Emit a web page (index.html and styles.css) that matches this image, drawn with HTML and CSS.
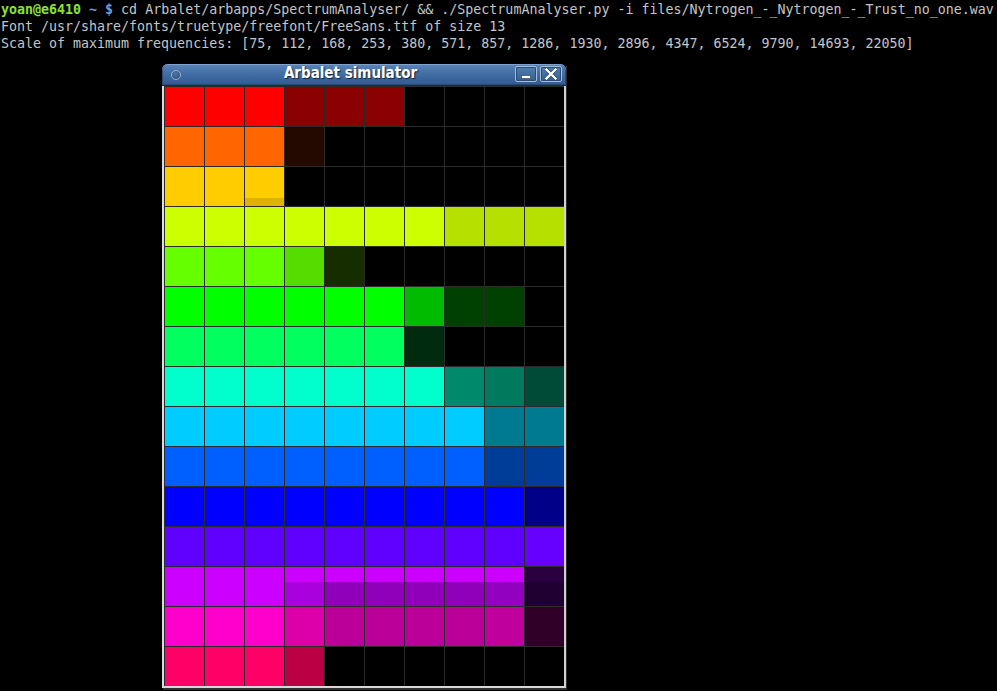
FILE: index.html
```html
<!DOCTYPE html>
<html>
<head>
<meta charset="utf-8">
<title>Arbalet simulator</title>
<link rel="stylesheet" href="styles.css">
</head>
<body>
<pre class="term"><span class="user">yoan@e6410</span> <span class="path">~ $</span> cd Arbalet/arbapps/SpectrumAnalyser/ &amp;&amp; ./SpectrumAnalyser.py -i files/Nytrogen_-_Nytrogen_-_Trust_no_one.wav
Font /usr/share/fonts/truetype/freefont/FreeSans.ttf of size 13
Scale of maximum frequencies: [75, 112, 168, 253, 380, 571, 857, 1286, 1930, 2896, 4347, 6524, 9790, 14693, 22050]</pre>
<div class="window">
  <div class="titlebar">
    <span class="menu-dot"></span>
    <span class="title">Arbalet simulator</span>
    <span class="wbtn">
      <svg width="12" height="12" viewBox="0 0 12 12"><rect x="1.5" y="7.5" width="9" height="3" fill="#fff" stroke="#1d3a5e" stroke-width="0.6"/></svg>
    </span>
    <span class="wbtn">
      <svg width="12" height="12" viewBox="0 0 12 12"><path d="M1.5 1.5 L10.5 10.5 M10.5 1.5 L1.5 10.5" stroke="#1d3a5e" stroke-width="3.6" stroke-linecap="square"/><path d="M1.5 1.5 L10.5 10.5 M10.5 1.5 L1.5 10.5" stroke="#fff" stroke-width="2.4" stroke-linecap="square"/></svg>
    </span>
  </div>
  <div class="frame">
    <div class="grid" id="grid"></div>
  </div>
</div>
<script src="script.js"></script>
</body>
</html>
```
FILE: styles.css
```css
html, body {
  margin: 0;
  padding: 0;
  background: #000;
  height: 100%;
  overflow: hidden;
}
.term {
  margin: 0;
  padding: 1px 0 0 1px;
  font-family: "DejaVu Sans Mono", monospace;
  font-size: 13.3px;
  line-height: 17px;
  color: #c3c6c8;
  white-space: pre;
}
.user {
  color: #8ae234;
  font-weight: bold;
}
.path {
  color: #729fcf;
  font-weight: bold;
}
.window {
  margin: 12px 0 0 162px;
  width: 404px;
  box-shadow: 1px 2px 0 #2e2e2e;
}
.titlebar {
  height: 21px;
  border-bottom: 1px solid #1c2c40;
  border-radius: 6px 6px 0 0;
  background: linear-gradient(to bottom, #5d86ba 0%, #4773a9 35%, #3a659c 70%, #315c92 100%);
  box-shadow: inset 0 1px 0 #7ea1cd, inset 0 0 0 1px #2b4a72;
  display: flex;
  align-items: center;
  padding: 0 4px 0 9px;
}
.menu-dot {
  width: 8px;
  height: 8px;
  border-radius: 50%;
  border: 1px solid #9fb3cc;
  background: radial-gradient(circle at 40% 35%, #4d78ad, #24466f);
  flex: none;
}
.title {
  flex: 1;
  text-align: center;
  margin: 0 0 3px 8px;
  font-family: "DejaVu Sans Condensed", "DejaVu Sans", sans-serif;
  font-stretch: condensed;
  font-weight: bold;
  font-size: 15px;
  line-height: 18px;
  color: #fff;
  text-shadow: 1px 1px 1px #13233a;
}
.wbtn {
  width: 20px;
  height: 14px;
  border: 1px solid #a9bdd6;
  border-radius: 2px;
  background: linear-gradient(to bottom, #527db1, #34608f);
  box-shadow: inset 0 0 0 1px #2a4d78;
  display: flex;
  align-items: center;
  justify-content: center;
  margin-left: 3px;
  margin-bottom: 1px;
}
.frame {
  display: flex;
  border-left: 2px solid #dcdcdc;
  border-right: 2px solid #d0d0d0;
  border-bottom: 2px solid #d8d8d8;
}
.grid {
  width: 400px;
  background: #2b2b2b;
  padding: 1px 0 0 1px;
  box-sizing: border-box;
  display: grid;
  grid-template-columns: repeat(10, 39px);
  grid-auto-rows: 39px;
  gap: 1px;
}
.cell {
  background: #000;
}
```
FILE: script.js
```javascript
var rows = [
  ["ff0000","ff0000","ff0000","8b0000","8b0000","8b0000","000000","000000","000000","000000"],
  ["ff6600","ff6600","ff6600","230900","000000","000000","000000","000000","000000","000000"],
  ["ffcc00","ffcc00","ffcc00/dcb400/31","000000","000000","000000","000000","000000","000000","000000"],
  ["ccff00","ccff00","ccff00","ccff00","ccff00","ccff00","ccff00","b6e000","b6e000","b6e000"],
  ["66ff00","66ff00","66ff00","55dd00","162d00","000000","000000","000000","000000","000000"],
  ["00ff00","00ff00","00ff00","00ff00","00ff00","00ff00","00bb00","004000","004000","000000"],
  ["00ff5f","00ff5f","00ff5f","00ff5f","00ff5f","00ff5f","002b0e","000000","000000","000000"],
  ["00ffcc","00ffcc","00ffcc","00ffcc","00ffcc","00ffcc","00ffcc","008a6c","007a5c","004a38"],
  ["00ccff","00ccff","00ccff","00ccff","00ccff","00ccff","00ccff","00ccff","007a90","007a90"],
  ["0060ff","0060ff","0060ff","0060ff","0060ff","0060ff","0060ff","0060ff","003d99","003d99"],
  ["0000ff","0000ff","0000ff","0000ff","0000ff","0000ff","0000ff","0000ff","0000ff","000088"],
  ["6000ff","6000ff","6000ff","6000ff","6000ff","6000ff","6000ff","6000ff","6000ff","6600ff"],
  ["cc00ff","cc00ff","cc00ff","cc00ff/aa00dd/15","cc00ff/9000bb/15","cc00ff/9000bb/15","cc00ff/9000bb/15","cc00ff/9000bb/15","cc00ff/9200c0/15","2a0040/200033/15"],
  ["ff00cc","ff00cc","ff00cc","dd00aa","bb0099","bb0099","bb0099","bb0099","bf009c","300028"],
  ["ff0066","ff0066","ff0066","bb0044","000000","000000","000000","000000","000000","000000"]
];
var grid = document.getElementById("grid");
rows.forEach(function (row) {
  row.forEach(function (c) {
    var d = document.createElement("div");
    d.className = "cell";
    if (c.indexOf("/") >= 0) {
      var p = c.split("/");
      d.style.background = "linear-gradient(#" + p[0] + " " + p[2] + "px, #" + p[1] + " " + p[2] + "px)";
    } else {
      d.style.background = "#" + c;
    }
    grid.appendChild(d);
  });
});
```
